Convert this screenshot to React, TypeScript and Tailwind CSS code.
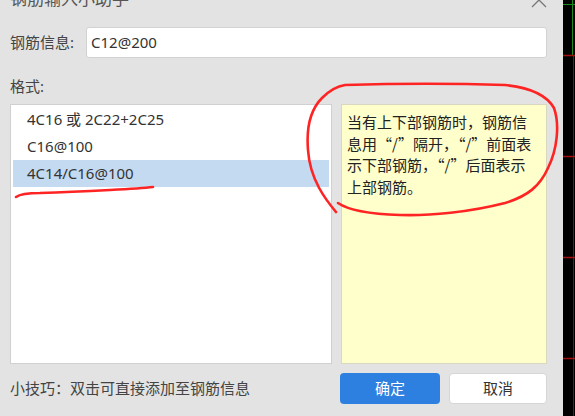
import React from 'react';

const font = "font-['Noto_Sans','Noto_Sans_CJK_SC',sans-serif]";

const formats = ['4C16 或 2C22+2C25', 'C16@100', '4C14/C16@100'];

const hintLines = [
    '当有上下部钢筋时，钢筋信',
    '息用“/”隔开，“/”前面表',
    '示下部钢筋，“/”后面表示',
    '上部钢筋。',
];

const CadStrip: React.FC = () => (
    <svg width="12" height="416" className="block">
        <rect width="12" height="416" fill="#000" />
        <line x1="9.5" y1="0" x2="9.5" y2="55" stroke="#1c8a1c" strokeWidth="1" />
        <line x1="0" y1="4.5" x2="12" y2="4.5" stroke="#1c8a1c" strokeWidth="1" />
        <line x1="10.5" y1="55" x2="10.5" y2="416" stroke="#8a0a0a" strokeWidth="1" />
        {[55, 156, 257, 358].map(y => (
            <line key={y} x1="0" y1={y + 0.5} x2="12" y2={y + 0.5} stroke="#a01010" strokeWidth="1.5" />
        ))}
    </svg>
);

const Annotations: React.FC = () => (
    <svg width="575" height="416" className="absolute left-0 top-0 pointer-events-none">
        <path
            d="M336 212 C 326 200, 310 180, 308 150 C 306 125, 312 108, 322 98 C 330 90, 338 86, 345 85 C 380 84, 440 83, 505 85 C 525 87, 545 92, 554 108 C 560 125, 557 150, 548 168 C 540 186, 528 196, 505 203 C 470 212, 430 216, 400 215 C 370 214, 348 210, 338 203"
            fill="none"
            stroke="#ff2424"
            strokeWidth="2.6"
            strokeLinecap="round"
            strokeLinejoin="round"
        />
        <path
            d="M16 197 C 20 194, 28 193, 40 193 C 70 192, 90 191, 110 190 C 130 189, 145 188, 153 187"
            fill="none"
            stroke="#ff2424"
            strokeWidth="2.6"
            strokeLinecap="round"
        />
    </svg>
);

export default function App() {
    return (
        <div className={`relative flex w-[575px] h-[416px] overflow-hidden ${font}`}>
            <div className="w-[563px] h-full bg-[#e3e3e3] flex flex-col pl-[10px] pr-[16px]">
                <div className="h-[27px] flex items-start justify-between">
                    <span className="-mt-[12px] text-[17px] leading-[22px] text-[#555]">钢筋输入小助手</span>
                    <svg width="16" height="16" viewBox="0 0 16 16" className="-mt-[8px]" stroke="#777" strokeWidth="1.3">
                        <line x1="1" y1="1" x2="15" y2="15" />
                        <line x1="15" y1="1" x2="1" y2="15" />
                    </svg>
                </div>

                <div className="flex items-center h-[31px]">
                    <span className="w-[76px] text-[15px] text-[#444]">钢筋信息:</span>
                    <div className="flex-1 h-full bg-white border border-[#d2d2d2] rounded-[3px] flex items-center px-[4px] text-[15px] text-[#333]">
                        C12@200
                    </div>
                </div>

                <div className="mt-[18px] h-[21px] leading-[21px] text-[15px] text-[#444]">格式:</div>

                <div className="mt-[7px] flex gap-[9px] h-[260px]">
                    <div className="w-[322px] bg-white border border-[#d0d0d0] pt-[1px] px-[2px]">
                        {formats.map((f, i) => (
                            <div
                                key={f}
                                className={`h-[27px] leading-[27px] pl-[14px] text-[15px] text-[#333] ${i === 2 ? 'bg-[#c4daf1]' : ''}`}
                            >
                                {f}
                            </div>
                        ))}
                    </div>
                    <div className="flex-1 bg-[#ffffcc] border border-[#d8d8c0] pt-[6px] px-[5px] text-[15px] leading-[21.5px] text-[#222] font-['Noto_Sans_CJK_SC',sans-serif]">
                        {hintLines.map(l => (
                            <div key={l} className="whitespace-nowrap">{l}</div>
                        ))}
                    </div>
                </div>

                <div className="mt-[9px] flex items-center h-[31px]">
                    <span className="flex-1 text-[15px] text-[#444]">小技巧：双击可直接添加至钢筋信息</span>
                    <button className="w-[100px] h-full rounded-[4px] bg-[#2d80e0] text-white text-[15px]">确定</button>
                    <button className="ml-[9px] w-[98px] h-full rounded-[4px] bg-white border border-[#d6d6d6] text-[#333] text-[15px]">取消</button>
                </div>
            </div>
            <CadStrip />
            <Annotations />
        </div>
    );
}
